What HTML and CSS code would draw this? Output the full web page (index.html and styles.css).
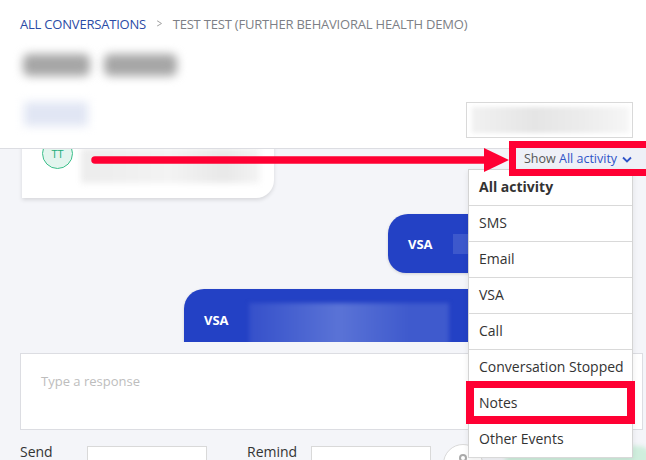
FILE: index.html
```html
<!DOCTYPE html>
<html>
<head lang="en">
    <meta charset="UTF-8">
    <title>Conversation</title>
    <link rel="stylesheet" href="styles.css">
</head>
<body>
<div class="app">
    <header class="top">
        <nav class="crumbs">
            <a class="crumb-link">ALL CONVERSATIONS</a>
            <span class="crumb-sep">&gt;</span>
            <span class="crumb-here">TEST TEST (FURTHER BEHAVIORAL HEALTH DEMO)</span>
        </nav>
        <div class="top-row">
            <div class="who">
                <div class="name">
                    <span class="name-blur"></span>
                    <span class="name-blur"></span>
                </div>
                <div class="link-blur"></div>
            </div>
            <div class="assign"><div class="assign-blur"></div></div>
        </div>
    </header>

    <section class="thread">
        <div class="card">
            <span class="avatar">TT</span>
            <span class="card-blur"></span>
        </div>
        <div class="bubble bubble-short">
            <span class="bubble-tag">VSA</span>
            <span class="bubble-blur"></span>
        </div>
        <div class="bubble bubble-long">
            <span class="bubble-tag">VSA</span>
            <span class="bubble-blur tall"></span>
        </div>
    </section>

    <section class="composer">
        <div class="reply">Type a response</div>
        <div class="controls">
            <span class="ctl-label">Send</span>
            <span class="ctl-input"></span>
            <span class="ctl-label remind">Remind</span>
            <span class="ctl-input"></span>
            <span class="ctl-round"><span class="ctl-glyph"></span></span>
            <span class="ctl-send"></span>
        </div>
    </section>

    <!-- filter + dropdown sit above the thread -->
    <div class="filter-btn">Show <span class="filter-val">All activity</span>
        <svg class="chev" width="10" height="7" viewBox="0 0 10 7"><path d="M1 1.5 L5 5.5 L9 1.5" fill="none" stroke="#2f54c8" stroke-width="1.8"/></svg>
    </div>
    <ul class="menu">
        <li class="active">All activity</li>
        <li>SMS</li>
        <li>Email</li>
        <li>VSA</li>
        <li>Call</li>
        <li>Conversation Stopped</li>
        <li>Notes</li>
        <li>Other Events</li>
    </ul>

    <!-- annotations -->
    <svg class="arrow" width="430" height="30" viewBox="0 0 430 30">
        <line x1="7" y1="14" x2="400" y2="14" stroke="#ff0033" stroke-width="7.5" stroke-linecap="round"/>
        <polygon points="396,2 421,14 396,26" fill="#ff0033"/>
    </svg>
    <div class="mark mark-filter"></div>
    <div class="mark mark-notes"></div>
</div>
</body>
</html>
```

FILE: styles.css
```css
* {
    padding: 0;
    margin: 0;
    list-style: none;
    box-sizing: border-box;
}

body {
    font-family: "Open Sans", "Liberation Sans", sans-serif;
    color: #333;
    background: #f4f5f9;
}

.app {
    width: 646px;
    height: 460px;
    position: relative;
    overflow: hidden;
    display: flex;
    flex-direction: column;
}

/* header */
.top {
    height: 149px;
    flex: none;
    background: #fff;
    border-bottom: 1px solid #dcdde2;
    padding: 15px 13px 0 20px;
    position: relative;
    z-index: 2;
}

.crumbs {
    font-size: 13px;
    line-height: 18px;
    letter-spacing: -0.2px;
    display: flex;
    gap: 10px;
}

.crumb-link {
    color: #2b4ba6;
}

.crumb-sep {
    color: #999;
    font-size: 12px;
    transform: scaleX(0.8);
}

.crumb-here {
    color: #7d7f86;
}

.top-row {
    display: flex;
    justify-content: space-between;
    align-items: flex-start;
}

.who {
    padding-top: 21px;
}

.name {
    display: flex;
    gap: 14px;
    padding-left: 3px;
}

.name-blur {
    width: 67px;
    height: 22px;
    background: #a6a6a6;
    border-radius: 6px;
    filter: blur(5px);
}

.name-blur + .name-blur {
    width: 73px;
}

.link-blur {
    width: 64px;
    height: 24px;
    margin: 26px 0 0 4px;
    background: #e1e6f4;
    filter: blur(5px);
}

.assign {
    width: 167px;
    height: 36px;
    margin-top: 69px;
    border: 1px solid #d9d9d9;
    padding: 4px 3px 4px 5px;
}

.assign-blur {
    height: 100%;
    background: linear-gradient(90deg, #f1f1f1, #e5e5e5 40%, #ececec 70%, #f6f6f6);
    filter: blur(2px);
}

/* thread */
.thread {
    height: 193px;
    flex: none;
    overflow: hidden;
    display: flex;
    flex-direction: column;
    align-items: flex-end;
    padding: 0 20px 0 22px;
}

.card {
    flex: none;
    align-self: flex-start;
    width: 252px;
    height: 74px;
    margin-top: -25px;
    background: #fff;
    border-radius: 0 0 18px 0;
    box-shadow: 0 2px 4px rgba(0, 0, 0, 0.12);
    padding: 14px 14px 0 20px;
    display: flex;
    gap: 8px;
}

.avatar {
    width: 31px;
    height: 31px;
    flex: none;
    border-radius: 50%;
    background: #e3f5ee;
    border: 1px solid #3cbf8a;
    color: #22ad7b;
    font-size: 11px;
    line-height: 29px;
    text-align: center;
}

.card-blur {
    width: 180px;
    height: 35px;
    margin-top: 10px;
    background: linear-gradient(90deg, #ececec, #f3f3f3 50%, #e8e8e8 80%, #f4f4f4);
    filter: blur(3px);
}

.bubble {
    flex: none;
    margin-top: 16px;
    width: 238px;
    height: 59px;
    background: #2341c5;
    border-radius: 20px 20px 0 18px;
    display: flex;
    align-items: center;
    padding-left: 20px;
    gap: 20px;
    color: #fff;
    box-shadow: 0 1px 3px rgba(0, 0, 0, 0.15);
}

.bubble-long {
    width: 442px;
    height: 90px;
    align-items: flex-start;
    padding-top: 14px;
}

.bubble-tag {
    font-size: 13px;
    font-weight: bold;
    line-height: 28px;
}

.bubble-long .bubble-tag {
    padding-top: 3px;
}

.bubble-blur {
    width: 100px;
    height: 20px;
    background: #3d58cc;
}

.bubble-blur.tall {
    width: 200px;
    height: 50px;
    background: linear-gradient(90deg, #3550ca, #5a73d6 45%, #3f5acd 80%);
    filter: blur(2px);
}

/* composer */
.composer {
    flex: 1;
    padding: 11px 3px 0 20px;
}

.reply {
    height: 77px;
    background: #fff;
    border: 1px solid #dcdde2;
    padding: 18px 20px;
    font-size: 13px;
    color: #bdbdbd;
}

.controls {
    display: flex;
    align-items: flex-start;
    margin-top: 16px;
    font-size: 14px;
}

.controls > span {
    flex: none;
}

.ctl-label {
    width: 67px;
    margin-top: -4px;
}

.ctl-label.remind {
    width: 64px;
    margin-left: 40px;
}

.ctl-input {
    width: 120px;
    height: 30px;
    background: #fff;
    border: 1px solid #d9d9d9;
}

.ctl-round {
    width: 40px;
    height: 40px;
    margin: -2px 0 0 12px;
    border-radius: 50%;
    background: #fff;
    border: 1px solid #d9d9d9;
    display: flex;
    justify-content: center;
    padding-top: 9px;
}

.ctl-glyph {
    width: 8px;
    height: 8px;
    border: 2px solid #aaa;
    border-radius: 50%;
}

.ctl-send {
    width: 150px;
    height: 34px;
    margin-left: 22px;
    border-radius: 17px;
    background: #cfeedd;
    filter: blur(2px);
}

/* filter dropdown */
.filter-btn {
    position: absolute;
    left: 516px;
    top: 148px;
    width: 140px;
    height: 21px;
    padding-left: 8px;
    background: #eef0f7;
    font-size: 12.5px;
    line-height: 21px;
    color: #555;
    z-index: 3;
}

.filter-val {
    color: #2f54c8;
}

.chev {
    margin-left: 2px;
}

.menu {
    position: absolute;
    left: 468px;
    top: 169px;
    width: 165px;
    background: #fff;
    border: 1px solid #d4d4d4;
    border-bottom: 0;
    box-shadow: 0 2px 6px rgba(0, 0, 0, 0.08);
    z-index: 3;
}

.menu li {
    height: 36px;
    border-bottom: 1px solid #d9d9d9;
    padding-left: 10px;
    font-size: 14px;
    line-height: 34px;
    color: #333;
}

.menu li.active {
    font-weight: bold;
}

/* red annotations */
.arrow {
    position: absolute;
    left: 88px;
    top: 146px;
    z-index: 4;
}

.mark {
    position: absolute;
    border: 7px solid #ff0033;
    z-index: 4;
}

.mark-filter {
    left: 509px;
    top: 141px;
    width: 145px;
    height: 35px;
    border-right: 0;
}

.mark-notes {
    left: 466px;
    top: 381px;
    width: 169px;
    height: 43px;
    border-width: 7px 8px 8px 8px;
}
```
